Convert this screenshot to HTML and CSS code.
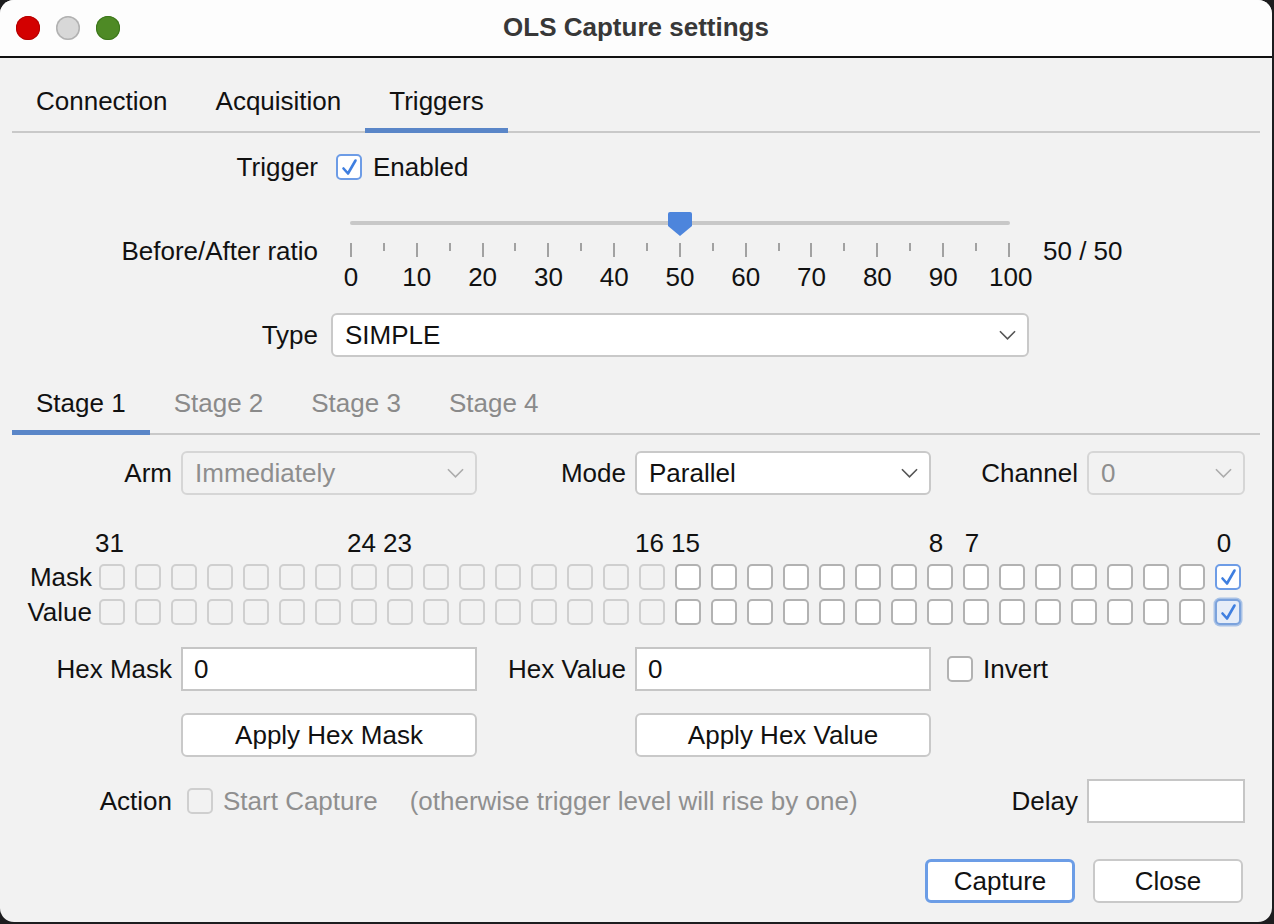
FILE: index.html
```html
<!DOCTYPE html>
<html lang="en">
<head>
<meta charset="utf-8">
<title>OLS Capture settings</title>
<link rel="stylesheet" href="styles.css">
</head>
<body>
<div class="window">
  <header class="titlebar">
    <div class="lights">
      <span class="light red"></span>
      <span class="light gray"></span>
      <span class="light green"></span>
    </div>
    <div class="title">OLS Capture settings</div>
    <div></div>
  </header>

  <div class="content">
    <nav class="tabs main-tabs">
      <div class="tab">Connection</div>
      <div class="tab">Acquisition</div>
      <div class="tab active">Triggers</div>
    </nav>

    <div class="trigger-form">
      <div class="frow row-trigger">
        <div class="flabel">Trigger</div>
        <div class="enabled-ctl">
          <span class="cb checked"><svg class="check" viewBox="0 0 22 22"><path d="M5.5 12.5 L10 17.5 L17.5 4.5"/></svg></span>
          <span class="cb-text">Enabled</span>
        </div>
      </div>

      <div class="frow row-slider">
        <div class="flabel">Before/After ratio</div>
        <div class="slider">
          <div class="track"></div>
          <svg class="thumb" viewBox="0 0 24 24"><path d="M2 0 H22 a2 2 0 0 1 2 2 V14 L12 24 L0 14 V2 a2 2 0 0 1 2 -2 z"/></svg>
          <div class="ticks">
            <span class="tick"></span><span class="tick minor"></span>
            <span class="tick"></span><span class="tick minor"></span>
            <span class="tick"></span><span class="tick minor"></span>
            <span class="tick"></span><span class="tick minor"></span>
            <span class="tick"></span><span class="tick minor"></span>
            <span class="tick"></span><span class="tick minor"></span>
            <span class="tick"></span><span class="tick minor"></span>
            <span class="tick"></span><span class="tick minor"></span>
            <span class="tick"></span><span class="tick minor"></span>
            <span class="tick"></span><span class="tick minor"></span>
            <span class="tick"></span>
          </div>
          <div class="tick-labels">
            <span>0</span><span>10</span><span>20</span><span>30</span><span>40</span><span>50</span>
            <span>60</span><span>70</span><span>80</span><span>90</span><span>100</span>
          </div>
        </div>
        <div class="ratio-value">50 / 50</div>
      </div>

      <div class="frow row-type">
        <div class="flabel">Type</div>
        <div class="select type-select">
          <span>SIMPLE</span>
          <svg class="chev" viewBox="0 0 18 10"><path d="M1 1 L9 9 L17 1"/></svg>
        </div>
      </div>
    </div>

    <nav class="tabs stage-tabs">
      <div class="tab active">Stage 1</div>
      <div class="tab muted">Stage 2</div>
      <div class="tab muted">Stage 3</div>
      <div class="tab muted">Stage 4</div>
    </nav>

    <div class="stage">
      <div class="sgrid row-arm">
        <div class="slabel">Arm</div>
        <div class="select disabled">
          <span>Immediately</span>
          <svg class="chev" viewBox="0 0 18 10"><path d="M1 1 L9 9 L17 1"/></svg>
        </div>
        <div class="slabel">Mode</div>
        <div class="select">
          <span>Parallel</span>
          <svg class="chev" viewBox="0 0 18 10"><path d="M1 1 L9 9 L17 1"/></svg>
        </div>
        <div class="slabel">Channel</div>
        <div class="select disabled">
          <span>0</span>
          <svg class="chev" viewBox="0 0 18 10"><path d="M1 1 L9 9 L17 1"/></svg>
        </div>
      </div>

      <div class="bits">
        <span></span>
        <span class="bitnum">31</span><span class="bitnum"></span><span class="bitnum"></span><span class="bitnum"></span>
        <span class="bitnum"></span><span class="bitnum"></span><span class="bitnum"></span><span class="bitnum">24</span>
        <span class="bitnum">23</span><span class="bitnum"></span><span class="bitnum"></span><span class="bitnum"></span>
        <span class="bitnum"></span><span class="bitnum"></span><span class="bitnum"></span><span class="bitnum">16</span>
        <span class="bitnum">15</span><span class="bitnum"></span><span class="bitnum"></span><span class="bitnum"></span>
        <span class="bitnum"></span><span class="bitnum"></span><span class="bitnum"></span><span class="bitnum">8</span>
        <span class="bitnum">7</span><span class="bitnum"></span><span class="bitnum"></span><span class="bitnum"></span>
        <span class="bitnum"></span><span class="bitnum"></span><span class="bitnum"></span><span class="bitnum">0</span>

        <span class="rowlabel">Mask</span>
        <span class="cb bit disabled"></span><span class="cb bit disabled"></span><span class="cb bit disabled"></span><span class="cb bit disabled"></span>
        <span class="cb bit disabled"></span><span class="cb bit disabled"></span><span class="cb bit disabled"></span><span class="cb bit disabled"></span>
        <span class="cb bit disabled"></span><span class="cb bit disabled"></span><span class="cb bit disabled"></span><span class="cb bit disabled"></span>
        <span class="cb bit disabled"></span><span class="cb bit disabled"></span><span class="cb bit disabled"></span><span class="cb bit disabled"></span>
        <span class="cb bit"></span><span class="cb bit"></span><span class="cb bit"></span><span class="cb bit"></span>
        <span class="cb bit"></span><span class="cb bit"></span><span class="cb bit"></span><span class="cb bit"></span>
        <span class="cb bit"></span><span class="cb bit"></span><span class="cb bit"></span><span class="cb bit"></span>
        <span class="cb bit"></span><span class="cb bit"></span><span class="cb bit"></span>
        <span class="cb bit checked"><svg class="check" viewBox="0 0 22 22"><path d="M5.5 12.5 L10 17.5 L17.5 4.5"/></svg></span>

        <span class="rowlabel">Value</span>
        <span class="cb bit disabled"></span><span class="cb bit disabled"></span><span class="cb bit disabled"></span><span class="cb bit disabled"></span>
        <span class="cb bit disabled"></span><span class="cb bit disabled"></span><span class="cb bit disabled"></span><span class="cb bit disabled"></span>
        <span class="cb bit disabled"></span><span class="cb bit disabled"></span><span class="cb bit disabled"></span><span class="cb bit disabled"></span>
        <span class="cb bit disabled"></span><span class="cb bit disabled"></span><span class="cb bit disabled"></span><span class="cb bit disabled"></span>
        <span class="cb bit"></span><span class="cb bit"></span><span class="cb bit"></span><span class="cb bit"></span>
        <span class="cb bit"></span><span class="cb bit"></span><span class="cb bit"></span><span class="cb bit"></span>
        <span class="cb bit"></span><span class="cb bit"></span><span class="cb bit"></span><span class="cb bit"></span>
        <span class="cb bit"></span><span class="cb bit"></span><span class="cb bit"></span>
        <span class="cb bit checked focus"><svg class="check" viewBox="0 0 22 22"><path d="M5.5 12.5 L10 17.5 L17.5 4.5"/></svg></span>
      </div>

      <div class="sgrid row-hex">
        <div class="slabel">Hex Mask</div>
        <div class="input">0</div>
        <div class="slabel">Hex Value</div>
        <div class="input">0</div>
        <div class="invert-ctl">
          <span class="cb"></span>
          <span class="cb-text">Invert</span>
        </div>
        <div></div>
      </div>

      <div class="sgrid row-apply">
        <div></div>
        <div class="btn">Apply Hex Mask</div>
        <div></div>
        <div class="btn">Apply Hex Value</div>
        <div></div>
        <div></div>
      </div>

      <div class="sgrid row-action">
        <div class="slabel">Action</div>
        <div class="action-opts">
          <span class="cb disabled"></span>
          <span class="cb-text dim">Start Capture</span>
          <span class="hint dim">(otherwise trigger level will rise by one)</span>
        </div>
        <div class="slabel">Delay</div>
        <div class="input"></div>
      </div>
    </div>

    <div class="footer">
      <div class="btn footer-btn default">Capture</div>
      <div class="btn footer-btn">Close</div>
    </div>
  </div>
</div>
</body>
</html>
```

FILE: styles.css
```css
* { box-sizing: border-box; }

html, body {
  margin: 0;
  height: 100%;
}

body {
  background: #1d1d1f;
  font-family: "Liberation Sans", Arial, sans-serif;
  font-size: 26px;
  color: #111;
  overflow: hidden;
}

.window {
  width: 1272px;
  height: 922px;
  background: #f2f2f2;
  border-radius: 14px;
  overflow: hidden;
}

/* Title bar */
.titlebar {
  height: 58px;
  background: #fdfdfd;
  border-bottom: 2px solid #111;
  display: grid;
  grid-template-columns: 1fr auto 1fr;
  align-items: center;
  padding-bottom: 1px;
}

.lights {
  display: flex;
  gap: 16px;
  padding-left: 16px;
}

.light {
  width: 24px;
  height: 24px;
  border-radius: 50%;
}

.light.red { background: #d30000; box-shadow: inset 0 0 0 1px #b50000; }
.light.gray { background: #d8d8d8; box-shadow: inset 0 0 0 1.5px #b2b2b2; }
.light.green { background: #4e8a25; box-shadow: inset 0 0 0 1px #3c761b; }

.title {
  font-weight: bold;
  color: #383838;
  font-size: 26px;
}

/* Content */
.content {
  padding: 0 12px;
}

.tabs {
  display: flex;
  border-bottom: 2px solid #c9c9c9;
}

.tab {
  padding: 0 24px 12px;
  line-height: 30px;
  border-bottom: 5px solid transparent;
  margin-bottom: -2px;
}

.tab.active { border-bottom-color: #5a86c8; }
.tab.muted { color: #8a8a8a; }

.main-tabs { margin-top: 28px; }
.stage-tabs { margin-top: 31px; }

/* Trigger form */
.trigger-form { padding-top: 19px; }

.frow {
  display: flex;
  align-items: center;
}

.flabel {
  width: 306px;
  flex: none;
  text-align: right;
  margin-right: 13px;
  line-height: 30px;
}

.row-trigger { height: 30px; }
.row-slider { height: 82px; margin-top: 28px; }
.row-type { height: 44px; margin-top: 21px; }

.enabled-ctl {
  display: flex;
  align-items: center;
  margin-left: 5px;
}

.cb-text { margin-left: 11px; line-height: 30px; }

/* Checkbox */
.cb {
  width: 26px;
  height: 26px;
  flex: none;
  border: 2px solid #b2b2b2;
  border-radius: 5px;
  background: #fff;
  display: inline-flex;
  align-items: center;
  justify-content: center;
}

.cb.disabled {
  background: #f2f2f2;
  border-color: #cfcfcf;
}

.cb.checked {
  border-color: #6d9ce6;
}

.cb.focus {
  background: #e6edf8;
  border-color: #7ba2dc;
  box-shadow: 0 0 0 1.5px #a9c2e6;
}

.check {
  width: 22px;
  height: 22px;
}

.check path {
  fill: none;
  stroke: #3f7fe0;
  stroke-width: 2.6;
  stroke-linecap: round;
  stroke-linejoin: round;
}

/* Slider */
.slider {
  width: 698px;
  height: 82px;
  flex: none;
  position: relative;
}

.track {
  margin: 11px 19px 0;
  height: 4px;
  background: #c8c8c8;
  border-radius: 2px;
}

.thumb {
  position: absolute;
  left: 337px;
  top: 2px;
  width: 24px;
  height: 24px;
}

.thumb path { fill: #4d85dc; }

.ticks {
  display: flex;
  justify-content: space-between;
  align-items: flex-start;
  margin: 18px 19px 0;
  height: 14px;
}

.tick {
  width: 2px;
  height: 14px;
  background: #a2a2a2;
}

.tick.minor { height: 8px; }

.tick-labels {
  display: flex;
  justify-content: space-between;
  margin-top: 5px;
  line-height: 30px;
}

.tick-labels span {
  width: 40px;
  text-align: center;
}

.ratio-value {
  margin-left: 14px;
  line-height: 30px;
}

/* Select */
.select {
  height: 44px;
  border: 2px solid #c9c9c9;
  border-radius: 6px;
  background: #fff;
  display: flex;
  align-items: center;
  justify-content: space-between;
  padding: 0 11px 0 12px;
}

.type-select { width: 698px; flex: none; }

.chev {
  width: 17px;
  height: 10px;
}

.chev path {
  fill: none;
  stroke: #555;
  stroke-width: 1.7;
}

.select.disabled {
  background: #f2f2f2;
  border-color: #d6d6d6;
  color: #8e8e8e;
}

.select.disabled .chev path { stroke: #acacac; }

/* Stage */
.sgrid {
  display: grid;
  grid-template-columns: 160px 296px 140px 296px 138px 158px;
  column-gap: 9px;
  align-items: center;
}

.slabel {
  text-align: right;
  line-height: 30px;
}

.row-arm { height: 44px; margin-top: 16px; }

.bits {
  display: grid;
  grid-template-columns: 83px repeat(32, 36px);
  grid-template-rows: 32px 35px 35px;
  align-items: center;
  margin-top: 32px;
}

.bitnum {
  text-align: center;
  padding-right: 10px;
  line-height: 30px;
}

.rowlabel {
  text-align: right;
  padding-right: 3px;
  line-height: 30px;
}

.cb.bit { margin-left: 4px; }

.input {
  height: 44px;
  border: 2px solid #c6c6c6;
  background: #fff;
  padding: 0 11px;
  display: flex;
  align-items: center;
}

.row-hex { margin-top: 18px; }

.invert-ctl {
  display: flex;
  align-items: center;
  margin-left: 7px;
}

.invert-ctl .cb-text { margin-left: 10px; }

.btn {
  height: 44px;
  border: 2px solid #c9c9c9;
  border-radius: 6px;
  background: #fff;
  display: flex;
  align-items: center;
  justify-content: center;
}

.row-apply { margin-top: 22px; }

.row-action { margin-top: 22px; }

.action-opts {
  grid-column: 2 / 5;
  display: flex;
  align-items: center;
  padding-left: 6px;
}

.action-opts .cb-text { margin-left: 10px; }

.hint { margin-left: 32px; line-height: 30px; white-space: nowrap; }

.dim { color: #8f8f8f; }

/* Footer */
.footer {
  display: flex;
  justify-content: flex-end;
  gap: 18px;
  padding-right: 17px;
  margin-top: 36px;
}

.footer-btn { width: 150px; }

.btn.default {
  border: 3px solid #6c9de6;
}
```
